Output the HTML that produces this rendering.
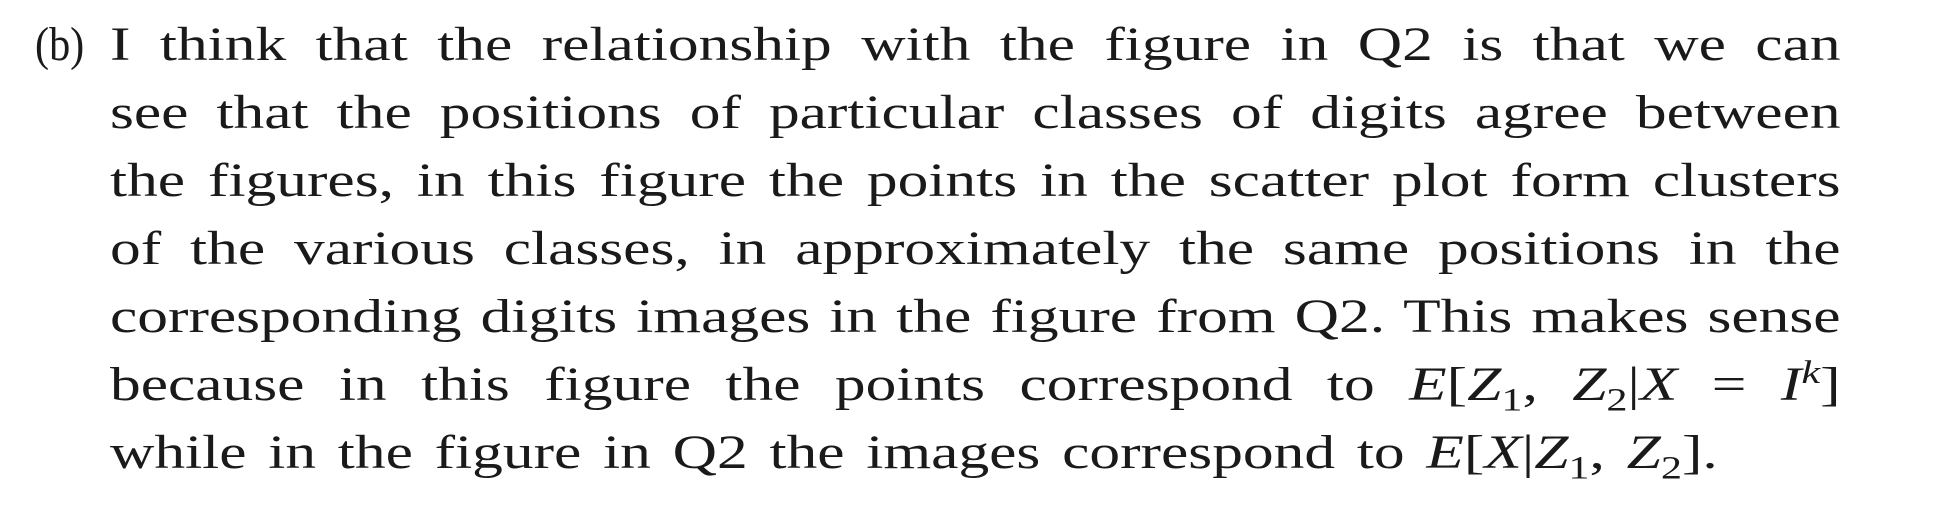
<!DOCTYPE html>
<html><head><style>
body{margin:0;width:1942px;height:518px;background:#fff;overflow:hidden;font-family:"Liberation Serif",serif;color:#1a1a1a;}
.l{position:absolute;left:110px;width:1352px;font-size:48px;line-height:68px;height:68px;text-align:justify;text-align-last:justify;white-space:normal;transform:scaleX(1.28);transform-origin:0 0;}
.l.n{white-space:nowrap;text-align:left;text-align-last:left;word-spacing:5px;}
.b{position:absolute;left:35px;font-size:48px;line-height:68px;top:11px;transform:scaleX(0.88);transform-origin:0 0;}
i{font-style:italic;}
sub,sup{font-size:33px;line-height:0;}
</style></head><body>
<div class="b">(b)</div>
<div class="l" style="top:11px">I think that the relationship with the figure in Q2 is that we can</div>
<div class="l" style="top:79px">see that the positions of particular classes of digits agree between</div>
<div class="l" style="top:147px">the figures, in this figure the points in the scatter plot form clusters</div>
<div class="l" style="top:215px">of the various classes, in approximately the same positions in the</div>
<div class="l" style="top:283px">corresponding digits images in the figure from Q2. This makes sense</div>
<div class="l" style="top:351px">because in this figure the points correspond to <i>E</i>[<i>Z</i><sub>1</sub>,&nbsp;<i>Z</i><sub>2</sub>|<i>X</i> = <i>I</i><sup><i>k</i></sup>]</div>
<div class="l n" style="top:419px">while in the figure in Q2 the images correspond to <i>E</i>[<i>X</i>|<i>Z</i><sub>1</sub>,&nbsp;<i>Z</i><sub>2</sub>].</div>
</body></html>
